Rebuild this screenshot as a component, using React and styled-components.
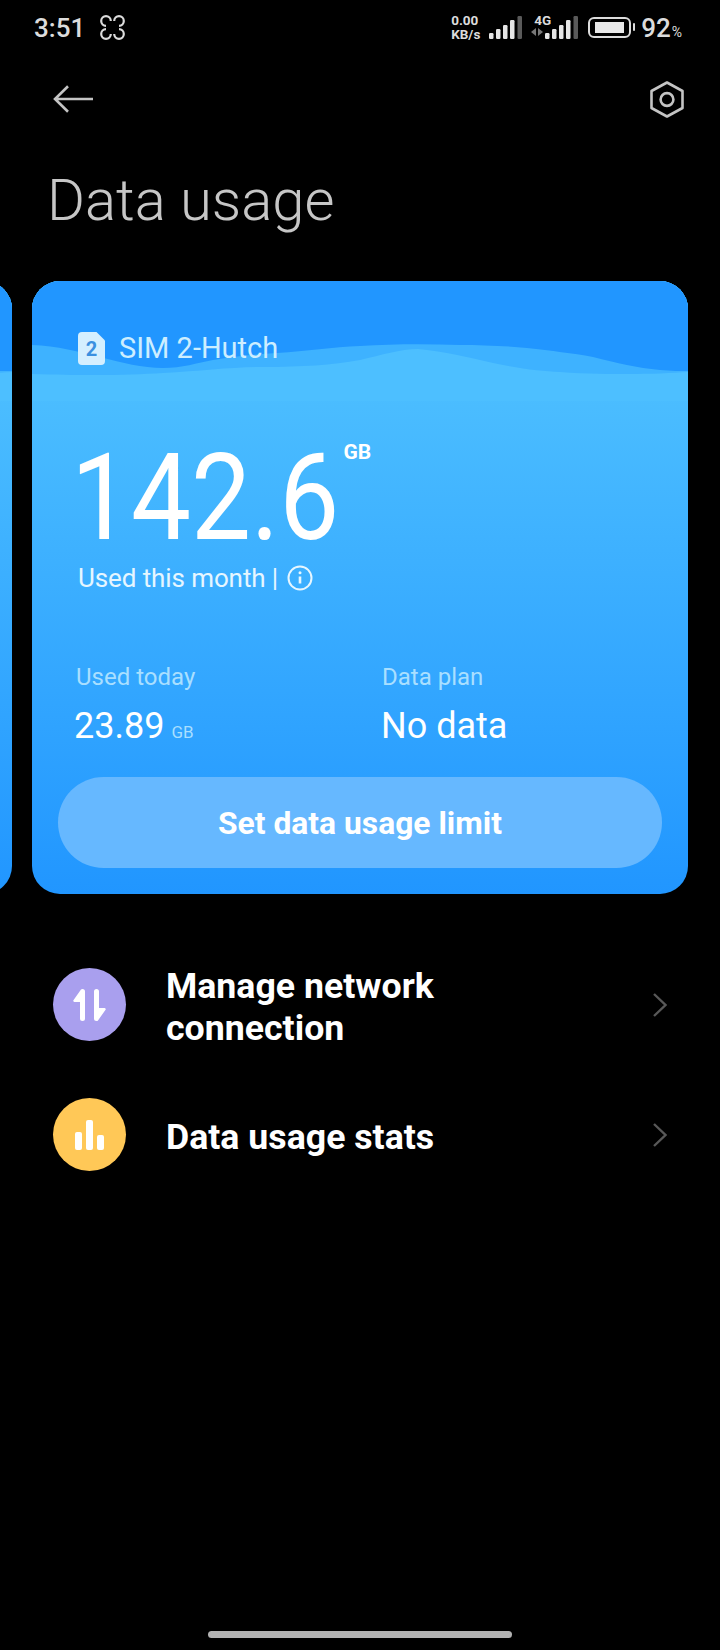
import React from "react";
import styled, { createGlobalStyle } from "styled-components";

const Global = createGlobalStyle`
  html, body { margin: 0; padding: 0; background: #000; }
  body { font-family: Roboto, "Noto Sans", sans-serif; }
  * { box-sizing: border-box; }
`;

const Screen = styled.div`
  position: relative;
  width: 720px;
  height: 1650px;
  background: #000;
  overflow: hidden;
  display: flex;
  flex-direction: column;
`;

const StatusBar = styled.div`
  height: 54px;
  padding: 0 38px 0 34px;
  display: flex;
  align-items: center;
  justify-content: space-between;
  color: #dcdcdc;
`;
const StatusLeft = styled.div`
  display: flex;
  align-items: center;
  gap: 15px;
`;
const Clock = styled.span`
  font-size: 26px;
  font-weight: 500;
  line-height: 1;
  padding-top: 2px;
`;
const StatusRight = styled.div`
  display: flex;
  align-items: center;
`;
const Speed = styled.div`
  display: flex;
  flex-direction: column;
  align-items: flex-start;
  font-size: 13.5px;
  font-weight: 700;
  line-height: 14px;
  width: 38px;
`;
const NetworkTag = styled.div`
  width: 14px;
  height: 26px;
  margin-left: 9px;
  margin-top: -2px;
  font-size: 13.5px;
  font-weight: 700;
  line-height: 14px;
  white-space: nowrap;
  padding-left: 3px;
`;
const Battery = styled.div`
  width: 43px;
  height: 21px;
  border: 2px solid #dcdcdc;
  border-radius: 6px;
  padding: 3px 5px;
  margin-left: 10px;
  position: relative;
  &::before {
    content: "";
    display: block;
    height: 100%;
    width: 29px;
    background: #e8e8e8;
  }
  &::after {
    content: "";
    position: absolute;
    right: -6px;
    top: 4px;
    width: 2px;
    height: 8px;
    border-radius: 1px;
    background: #dcdcdc;
  }
`;
const Percent = styled.span`
  font-size: 26px;
  font-weight: 500;
  line-height: 1;
  margin-left: 10px;
  padding-top: 2px;
`;
const PercentSign = styled.span`
  font-size: 14px;
  font-weight: 400;
  margin-left: 1px;
`;

const NavBar = styled.div`
  height: 90px;
  padding: 0 36px 0 53px;
  display: flex;
  align-items: center;
  justify-content: space-between;
`;

const Title = styled.h1`
  margin: 0;
  padding: 14px 0 0 47px;
  height: 98px;
  font-size: 58px;
  font-weight: 300;
  line-height: 84px;
  color: #c6c6c6;
`;

const Carousel = styled.div`
  margin-top: 39px;
  display: flex;
  gap: 20px;
  margin-left: -644px;
`;

const Card = styled.section`
  position: relative;
  flex: none;
  width: 656px;
  height: 613px;
  border-radius: 28px;
  overflow: hidden;
  background: linear-gradient(#4dbfff 90px, #2196ff 100%);
  color: #fff;
  padding: 49px 26px 26px;
  display: flex;
  flex-direction: column;
`;
const WaveArt = styled.svg`
  position: absolute;
  left: 0;
  top: 0;
`;
const SimRow = styled.div`
  position: relative;
  display: flex;
  align-items: center;
  gap: 14px;
  padding-left: 20px;
  height: 36px;
  font-size: 29px;
  color: #cdeeff;
`;
const BigRow = styled.div`
  position: relative;
  display: flex;
  align-items: flex-start;
  margin-top: 69px;
  padding-left: 13px;
  height: 127px;
`;
const BigNumber = styled.span`
  display: inline-block;
  font-size: 120px;
  line-height: 127px;
  font-weight: 400;
  transform: scaleX(0.89);
  transform-origin: left center;
  margin-right: -36px;
`;
const BigUnit = styled.span`
  font-size: 21px;
  font-weight: 700;
  line-height: 26px;
  margin: 4px 0 0 7px;
`;
const MonthRow = styled.div`
  position: relative;
  display: flex;
  align-items: center;
  gap: 9px;
  padding-left: 20px;
  height: 32px;
  font-size: 26px;
  letter-spacing: -0.1px;
  color: #e6f6ff;
`;
const Stats = styled.div`
  position: relative;
  display: grid;
  grid-template-columns: 306px 1fr;
  margin-top: 69px;
  padding-left: 18px;
`;
const StatLabel = styled.div`
  font-size: 24px;
  line-height: 28px;
  color: #a9dfff;
`;
const StatValue = styled.div`
  margin: 13px 0 0 ${(p) => p.$shift}px;
  font-size: 36px;
  line-height: 44px;
  color: #fff;
`;
const StatUnit = styled.span`
  font-size: 17px;
  color: #a9dfff;
  margin-left: 7px;
`;
const LimitButton = styled.div`
  position: relative;
  margin-top: 23px;
  height: 91px;
  border-radius: 46px;
  background: #66b8ff;
  display: flex;
  align-items: center;
  justify-content: center;
  font-size: 31.8px;
  font-weight: 700;
  color: #fff;
`;

const List = styled.div`
  margin-top: 74px;
  padding: 0 53px;
  display: flex;
  flex-direction: column;
  gap: 57px;
`;
const Row = styled.div`
  display: flex;
  align-items: center;
  height: 73px;
`;
const RowIcon = styled.div`
  flex: none;
  width: 73px;
  height: 73px;
  border-radius: 50%;
  background: ${(p) => p.$color};
  display: flex;
  align-items: center;
  justify-content: center;
`;
const RowText = styled.div`
  flex: 1;
  margin-left: 40px;
  padding-top: 4px;
  font-size: 35.7px;
  font-weight: 700;
  line-height: 42px;
  color: #fff;
`;

const HomeBar = styled.div`
  position: absolute;
  left: 208px;
  bottom: 12px;
  width: 304px;
  height: 7px;
  border-radius: 4px;
  background: #b2b2b2;
`;

const Signal = () => (
  <svg width="33" height="23" viewBox="0 0 33 23">
    <rect x="0" y="17" width="4.5" height="6" rx="1.2" fill="#e6e6e6" />
    <rect x="7" y="13" width="4.5" height="10" rx="1.2" fill="#e6e6e6" />
    <rect x="14" y="9" width="4.5" height="14" rx="1.2" fill="#e6e6e6" />
    <rect x="21" y="4" width="4.5" height="19" rx="1.2" fill="#e6e6e6" />
    <rect x="28.5" y="0" width="4.5" height="23" rx="1.2" fill="#5a5a5a" />
  </svg>
);

const LoopLogo = () => (
  <svg width="25" height="25" viewBox="0 0 25 25" fill="none" stroke="#dcdcdc" strokeWidth="2.2">
    <path d="M10.800 6A4.800 4.800 0 1 0 6 10.800" />
    <path d="M14.200 6A4.800 4.800 0 1 1 19 10.800" />
    <path d="M10.800 19A4.800 4.800 0 1 1 6 14.200" />
    <path d="M14.200 19A4.800 4.800 0 1 0 19 14.200" />
  </svg>
);

const Waves = () => (
  <WaveArt width="656" height="120" viewBox="0 0 656 120">
    <rect width="656" height="120" fill="#4dbfff" />
    <path
      d="M0 93C60 95 100 94 131 92C170 90 200 86 231 86C270 86 300 84 328 79C350 74 368 68 386 68C410 70 435 76 461 82C490 88 510 90 528 91C555 93 580 93 595 93C620 93 640 92 656 91V0H0Z"
      fill="#3eb2ff"
    />
    <path
      d="M0 64C50 66 90 87 131 87C150 87 165 82 181 79C205 75 225 73 245 72C275 70 300 66 328 65C360 63 395 63 428 64C450 64 475 65 495 67C520 70 540 72 561 76C585 82 605 87 628 89C640 90 648 90 656 90V0H0Z"
      fill="#2196ff"
    />
  </WaveArt>
);

const RowChevron = () => (
  <svg width="14" height="24" viewBox="0 0 14 24" fill="none" stroke="#585858" strokeWidth="2.4">
    <path d="M1 1l11.500 11L1 23" />
  </svg>
);

export default function App() {
  return (
    <Screen>
      <Global />
      <StatusBar>
        <StatusLeft>
          <Clock>3:51</Clock>
          <LoopLogo />
        </StatusLeft>
        <StatusRight>
          <Speed>
            <span>0.00</span>
            <span>KB/s</span>
          </Speed>
          <Signal />
          <NetworkTag>
            4G
            <svg width="12" height="8" viewBox="0 0 12 8" style={{ display: "block", marginLeft: -3, marginTop: 1 }}>
              <path d="M5 0v8L0 4zM7 0l5 4-5 4z" fill="#777" />
            </svg>
          </NetworkTag>
          <Signal />
          <Battery />
          <Percent>
            92<PercentSign>%</PercentSign>
          </Percent>
        </StatusRight>
      </StatusBar>

      <NavBar>
        <svg width="41" height="28" viewBox="0 0 41 28" fill="none" stroke="#c4c4c4" strokeWidth="2.6">
          <path d="M40 14H2M15 1.200 2 14l13 12.800" />
        </svg>
        <svg width="34" height="37" viewBox="0 0 34 37" fill="none" stroke="#c4c4c4" strokeWidth="2.6" strokeLinejoin="round">
          <path d="M17 1.500 32.500 10v17L17 35.500 1.500 27V10z" />
          <circle cx="17" cy="18.500" r="6.400" />
        </svg>
      </NavBar>

      <Title>Data usage</Title>

      <Carousel>
        <Card aria-hidden="true">
          <Waves />
        </Card>
        <Card>
          <Waves />
          <SimRow>
            <svg width="27" height="33" viewBox="0 0 27 33">
              <path d="M4 0h14.500L27 8.500V29a4 4 0 0 1-4 4H4a4 4 0 0 1-4-4V4a4 4 0 0 1 4-4z" fill="#d4efff" />
              <text x="13.500" y="24" textAnchor="middle" fontFamily="Roboto, sans-serif" fontWeight="700" fontSize="20" fill="#3a90e0">2</text>
            </svg>
            SIM 2-Hutch
          </SimRow>
          <BigRow>
            <BigNumber>142.6</BigNumber>
            <BigUnit>GB</BigUnit>
          </BigRow>
          <MonthRow>
            <span>Used this month |</span>
            <svg width="26" height="26" viewBox="0 0 26 26" fill="none" stroke="#e6f6ff" strokeWidth="2">
              <circle cx="13" cy="13" r="11.500" />
              <path d="M13 11.500v7" strokeWidth="2.600" />
              <circle cx="13" cy="7.800" r="1.500" fill="#e6f6ff" stroke="none" />
            </svg>
          </MonthRow>
          <Stats>
            <div>
              <StatLabel>Used today</StatLabel>
              <StatValue $shift={-2}>
                23.89<StatUnit>GB</StatUnit>
              </StatValue>
            </div>
            <div>
              <StatLabel>Data plan</StatLabel>
              <StatValue $shift={-1}>No data</StatValue>
            </div>
          </Stats>
          <LimitButton>Set data usage limit</LimitButton>
        </Card>
      </Carousel>

      <List>
        <Row>
          <RowIcon $color="#a99fee">
            <svg width="33" height="32" viewBox="0 0 33 32" fill="#fff">
              <path d="M9.500 0a2.500 2.500 0 0 1 2.500 2.500V29.500a2.500 2.500 0 0 1-5 0V13H1.500a1.200 1.200 0 0 1-.9-2L8 .6A2 2 0 0 1 9.500 0z" />
              <path d="M23.500 32a2.500 2.500 0 0 1-2.500-2.500V2.500a2.500 2.500 0 0 1 5 0V19h5.500a1.200 1.200 0 0 1 .9 2L25 31.400a2 2 0 0 1-1.500.6z" />
            </svg>
          </RowIcon>
          <RowText>
            Manage network
            <br />
            connection
          </RowText>
          <RowChevron />
        </Row>
        <Row>
          <RowIcon $color="#ffc857">
            <svg width="29" height="30" viewBox="0 0 29 30" fill="#fff">
              <rect x="0" y="12" width="7" height="18" rx="2" />
              <rect x="11" y="0" width="7" height="30" rx="2" />
              <rect x="22" y="15" width="7" height="15" rx="2" />
            </svg>
          </RowIcon>
          <RowText>Data usage stats</RowText>
          <RowChevron />
        </Row>
      </List>

      <HomeBar />
    </Screen>
  );
}
